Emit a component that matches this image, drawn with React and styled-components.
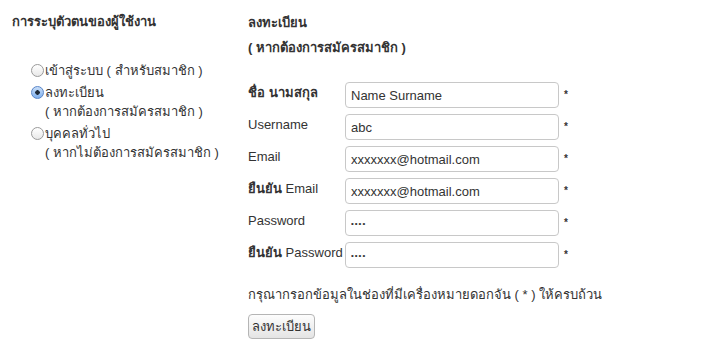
import React from 'react';
import styled, { createGlobalStyle } from 'styled-components';

const GlobalStyle = createGlobalStyle`
  body {
    margin: 0;
    background: #fff;
    font-family: "Liberation Sans", "Noto Sans", "DejaVu Sans", sans-serif;
    font-size: 13px;
    color: #333;
  }
`;

const fields = [
  { label: 'ชื่อ นามสกุล', value: 'Name Surname', type: 'text', thaiBold: 'ชื่อ นามสกุล' },
  { label: 'Username', value: 'abc', type: 'text' },
  { label: 'Email', value: 'xxxxxxx@hotmail.com', type: 'text' },
  { label: 'ยืนยัน Email', value: 'xxxxxxx@hotmail.com', type: 'text', thaiBold: 'ยืนยัน' },
  { label: 'Password', value: 'abcd', type: 'password' },
  { label: 'ยืนยัน Password', value: 'abcd', type: 'password', thaiBold: 'ยืนยัน' },
];

const options = [
  { title: 'เข้าสู่ระบบ ( สำหรับสมาชิก )' },
  { title: 'ลงทะเบียน', sub: '( หากต้องการสมัครสมาชิก )', checked: true },
  { title: 'บุคคลทั่วไป', sub: '( หากไม่ต้องการสมัครสมาชิก )' },
];

function App() {
  return (
    <Page>
      <GlobalStyle />
      <Side>
        <Heading>การระบุตัวตนของผู้ใช้งาน</Heading>
        <RadioList>
          {options.map((o) => (
            <RadioItem key={o.title}>
              <RadioRow>
                <Radio type="radio" name="who" defaultChecked={o.checked} />
                <span>{o.title}</span>
              </RadioRow>
              {o.sub && <SubLine>{o.sub}</SubLine>}
            </RadioItem>
          ))}
        </RadioList>
      </Side>
      <Main>
        <Heading>ลงทะเบียน</Heading>
        <SubHeading>( หากต้องการสมัครสมาชิก )</SubHeading>
        <Form>
          {fields.map((f) => (
            <Row key={f.label}>
              <Label>
                {f.thaiBold ? (
                  <>
                    <b>{f.thaiBold}</b>
                    {f.label.slice(f.thaiBold.length)}
                  </>
                ) : (
                  f.label
                )}
              </Label>
              <Input
                type={f.type}
                defaultValue={f.value}
                $secret={f.type === 'password'}
              />
              <Star>*</Star>
            </Row>
          ))}
        </Form>
        <Note>กรุณากรอกข้อมูลในช่องที่มีเครื่องหมายดอกจัน ( * ) ให้ครบถ้วน</Note>
        <Button type="button">ลงทะเบียน</Button>
      </Main>
    </Page>
  );
}

const Page = styled.div`
  display: flex;
  align-items: flex-start;
  padding-top: 12px;
`;

const Side = styled.div`
  width: 236px;
  padding-left: 12px;
`;

const Main = styled.div`
  display: flex;
  flex-direction: column;
  align-items: flex-start;
  padding-top: 1px;
`;

const Heading = styled.div`
  font-weight: 700;
  line-height: 19px;
`;

const SubHeading = styled(Heading)`
  margin-top: 6px;
`;

const RadioList = styled.div`
  margin-top: 30px;
  padding-left: 19px;
  display: flex;
  flex-direction: column;
  gap: 3px;
`;

const RadioItem = styled.div`
  display: flex;
  flex-direction: column;
`;

const RadioRow = styled.label`
  display: flex;
  align-items: center;
  line-height: 19px;
`;

const Radio = styled.input`
  appearance: none;
  margin: 0 1px 0 0;
  width: 13px;
  height: 13px;
  border-radius: 50%;
  border: 1px solid #9a9a9a;
  background: linear-gradient(#fff, #e8e8e8);
  box-sizing: border-box;
  &:checked {
    border-color: #5a86c8;
    background: radial-gradient(circle, #1e2a3a 0 2px, transparent 2.5px),
      linear-gradient(#c9def8, #7fb0ee);
  }
`;

const SubLine = styled.div`
  padding-left: 14px;
  line-height: 19px;
`;

const Form = styled.div`
  margin-top: 25px;
  display: flex;
  flex-direction: column;
  gap: 6px;
`;

const Row = styled.div`
  display: flex;
  align-items: flex-start;
`;

const Label = styled.div`
  width: 97px;
  padding-top: 3px;
  line-height: 16px;
  b {
    font-weight: 700;
  }
`;

const Input = styled.input`
  box-sizing: border-box;
  width: 214px;
  height: 26px;
  margin: 0;
  padding: 0 5px;
  border: 1px solid #c8c8c8;
  border-radius: 4px;
  font-family: "Liberation Sans", "Noto Sans", sans-serif;
  font-size: ${(p) => (p.$secret ? '8px' : '13px')};
  letter-spacing: ${(p) => (p.$secret ? '1px' : 'normal')};
  color: #333;
  background: #fff;
  outline: none;
`;

const Star = styled.span`
  align-self: center;
  margin-left: 5px;
  font-size: 10px;
  font-weight: 700;
  line-height: 10px;
  color: #333;
`;

const Note = styled.div`
  margin-top: 17px;
  line-height: 19px;
`;

const Button = styled.button`
  margin-top: 10px;
  height: 25px;
  padding: 0 3px;
  border: 1px solid #b5b5b5;
  border-radius: 4px;
  background: linear-gradient(#fdfdfd, #e4e4e4);
  font-family: "Liberation Sans", "Noto Sans", sans-serif;
  font-size: 13px;
  color: #333;
`;

export default App;
